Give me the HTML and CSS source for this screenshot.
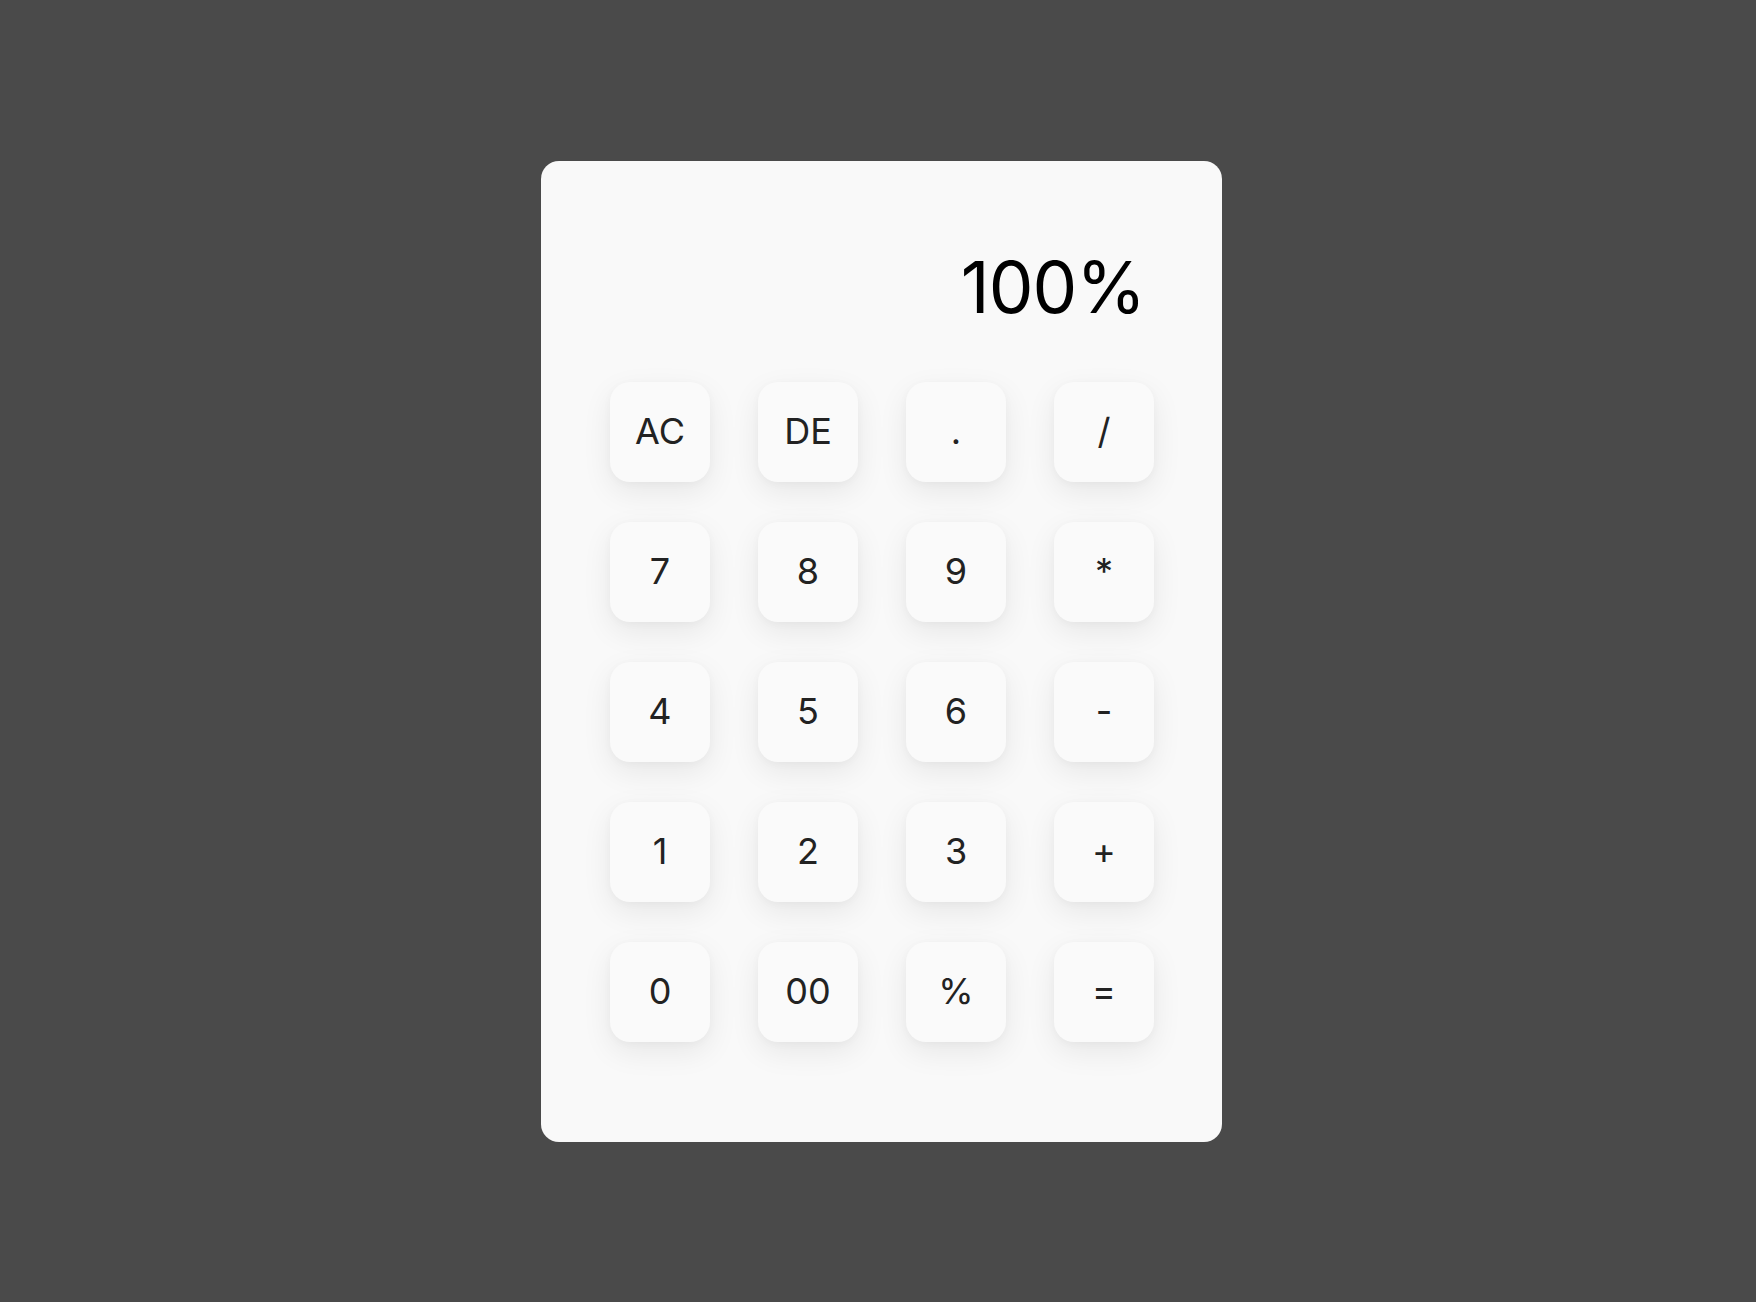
FILE: index.html
```html
<!DOCTYPE html>
<html lang="en">
<head>
<meta charset="utf-8">
<title>Calculator</title>
<link rel="stylesheet" href="styles.css">
</head>
<body>
<div class="page">
  <div class="calculator">
    <div class="display">100%</div>
    <div class="keys">
      <button class="key">AC</button>
      <button class="key">DE</button>
      <button class="key">.</button>
      <button class="key">/</button>
      <button class="key">7</button>
      <button class="key">8</button>
      <button class="key">9</button>
      <button class="key">*</button>
      <button class="key">4</button>
      <button class="key">5</button>
      <button class="key">6</button>
      <button class="key">-</button>
      <button class="key">1</button>
      <button class="key">2</button>
      <button class="key">3</button>
      <button class="key">+</button>
      <button class="key">0</button>
      <button class="key">00</button>
      <button class="key">%</button>
      <button class="key">=</button>
    </div>
  </div>
</div>
</body>
</html>
```
FILE: styles.css
```css
* { box-sizing: border-box; }
html, body {
  margin: 0;
  padding: 0;
  background: #4a4a4a;
  font-family: Inter, "Noto Sans", sans-serif;
}
.page {
  min-height: 100vh;
  display: flex;
  align-items: center;
  justify-content: center;
  padding-left: 7px;
}
.calculator {
  width: 681px;
  height: 981px;
  background: #f9f9f9;
  border-radius: 18px;
  padding: 82px 68px 100px 69px;
  display: flex;
  flex-direction: column;
}
.display {
  height: 88px;
  line-height: 88px;
  font-size: 71px;
  letter-spacing: -1px;
  color: #000;
  text-align: right;
  padding-right: 9px;
  margin-bottom: 51px;
  white-space: nowrap;
}
.keys {
  display: grid;
  grid-template-columns: repeat(4, 100px);
  grid-auto-rows: 100px;
  column-gap: 48px;
  row-gap: 40px;
}
.key {
  border: none;
  margin: 0;
  padding: 0 0 2px;
  background: #fafafa;
  border-radius: 20px;
  box-shadow: 0 10px 30px rgba(0, 0, 0, 0.075), 0 2px 8px rgba(0, 0, 0, 0.03);
  font-family: Inter, "Noto Sans", sans-serif;
  font-size: 36px;
  color: #222;
  display: flex;
  align-items: center;
  justify-content: center;
}
```
